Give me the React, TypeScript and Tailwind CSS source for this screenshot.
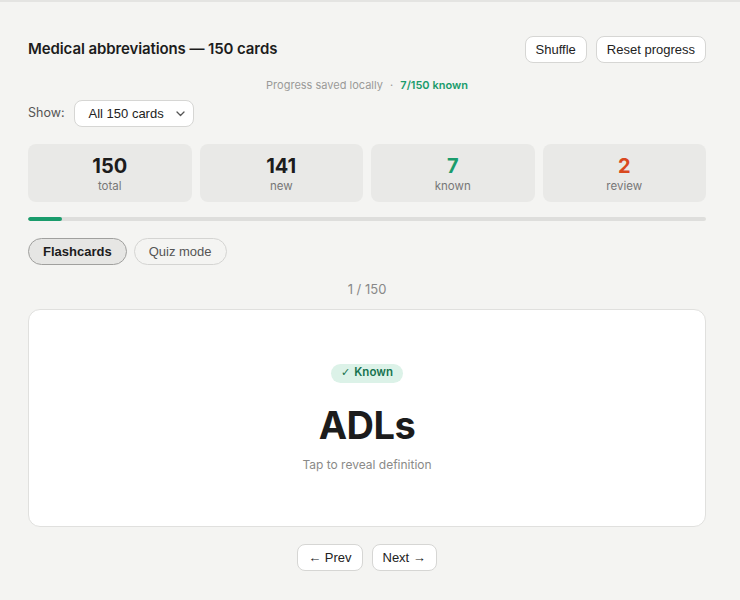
import React, { useState } from 'react';

const stats = [
  { value: '150', label: 'total', color: 'text-[#1c1c1c]' },
  { value: '141', label: 'new', color: 'text-[#1c1c1c]' },
  { value: '7', label: 'known', color: 'text-[#1a9c6c]' },
  { value: '2', label: 'review', color: 'text-[#d9491f]' },
];

// form controls render in Helvetica-like font, the rest in the UI sans
const ctrl = 'font-[Liberation_Sans,Arial,sans-serif]';

const App: React.FC = () => {
  const [mode, setMode] = useState<'flash' | 'quiz'>('flash');
  const known = 7;
  const total = 150;

  const btn = `h-[27px] px-[10px] rounded-[8px] bg-white border border-[#d6d6d4] text-[13px] text-[#222] ${ctrl}`;
  const tab = (active: boolean) =>
    `h-[27px] px-[14px] rounded-full text-[13px] ${ctrl} ${
      active ? 'bg-[#e6e6e4] border border-[#a0a09e] font-bold text-[#1c1c1c]' : 'border border-[#d4d4d2] text-[#555]'
    }`;

  return (
    <div className="min-h-screen bg-[#f4f4f2] border-t-2 border-[#e4e4e2] text-[#1c1c1c] font-[Inter,Liberation_Sans,sans-serif]">
      <div className="w-[678px] ml-[28px] pt-[34px]">
        {/* header */}
        <div className="flex items-center justify-between h-[27px]">
          <h1 className="text-[15px] font-semibold tracking-[-0.1px]">Medical abbreviations — 150 cards</h1>
          <div className="flex gap-[9px]">
            <button className={btn}>Shuffle</button>
            <button className={btn}>Reset progress</button>
          </div>
        </div>

        <p className="mt-[14px] text-center text-[11px] leading-[16px] text-[#9a9a98]">
          Progress saved locally <span className="mx-[4px]">·</span>{' '}
          <span className="font-semibold text-[#1a9c6c]">{known}/{total} known</span>
        </p>

        {/* filter */}
        <div className="mt-[7px] flex items-center gap-[9px]">
          <span className="text-[12.5px] text-[#555]">Show:</span>
          <div
            className={`relative w-[120px] h-[27px] rounded-[8px] bg-white border border-[#d6d6d4] flex items-center pl-[14px] text-[13px] text-[#222] ${ctrl}`}
          >
            All 150 cards
            <svg className="absolute right-[8px] top-[10px]" width="9" height="6" viewBox="0 0 9 6" fill="none">
              <path d="M1 1l3.5 3.5L8 1" stroke="#555" strokeWidth="1.3" strokeLinecap="round" strokeLinejoin="round" />
            </svg>
          </div>
        </div>

        {/* stats */}
        <div className="mt-[17px] grid grid-cols-4 gap-[8px]">
          {stats.map(s => (
            <div key={s.label} className="h-[58px] rounded-[8px] bg-[#e9e9e7] flex flex-col items-center justify-center">
              <div className={`text-[20px] leading-[24px] font-bold ${s.color}`}>{s.value}</div>
              <div className="mt-[1px] text-[11.5px] leading-[14px] text-[#777]">{s.label}</div>
            </div>
          ))}
        </div>

        {/* progress */}
        <div className="mt-[15px] h-[4px] rounded-full bg-[#dededc] overflow-hidden">
          <div className="h-full rounded-full bg-[#1a9c6c]" style={{ width: `${(known / total) * 100 + 0.3}%` }} />
        </div>

        {/* tabs */}
        <div className="mt-[17px] flex gap-[7px]">
          <button onClick={() => setMode('flash')} className={tab(mode === 'flash')}>
            Flashcards
          </button>
          <button onClick={() => setMode('quiz')} className={tab(mode === 'quiz')}>
            Quiz mode
          </button>
        </div>

        <p className="mt-[15px] text-center text-[13px] leading-[18px] text-[#888]">1 / 150</p>

        {/* card */}
        <div className="mt-[11px] h-[218px] rounded-[12px] bg-white border border-[#e0e0de] flex flex-col items-center justify-center">
          <span className="h-[19px] px-[10px] rounded-full bg-[#dcf2e8] text-[#17734f] text-[11.5px] font-semibold flex items-center gap-[4px]">
            <span className="font-[DejaVu_Sans,sans-serif] text-[11px]">✓</span>
            Known
          </span>
          <div className="mt-[19px] text-[38px] leading-[46px] font-bold tracking-[-0.5px] text-[#1c1c1c]">ADLs</div>
          <div className="mt-[9px] text-[12px] leading-[16px] text-[#8a8a88]">Tap to reveal definition</div>
        </div>

        {/* nav */}
        <div className="mt-[17px] flex justify-center gap-[9px]">
          <button className={btn}>← Prev</button>
          <button className={btn}>Next →</button>
        </div>
      </div>
    </div>
  );
};

export default App;
